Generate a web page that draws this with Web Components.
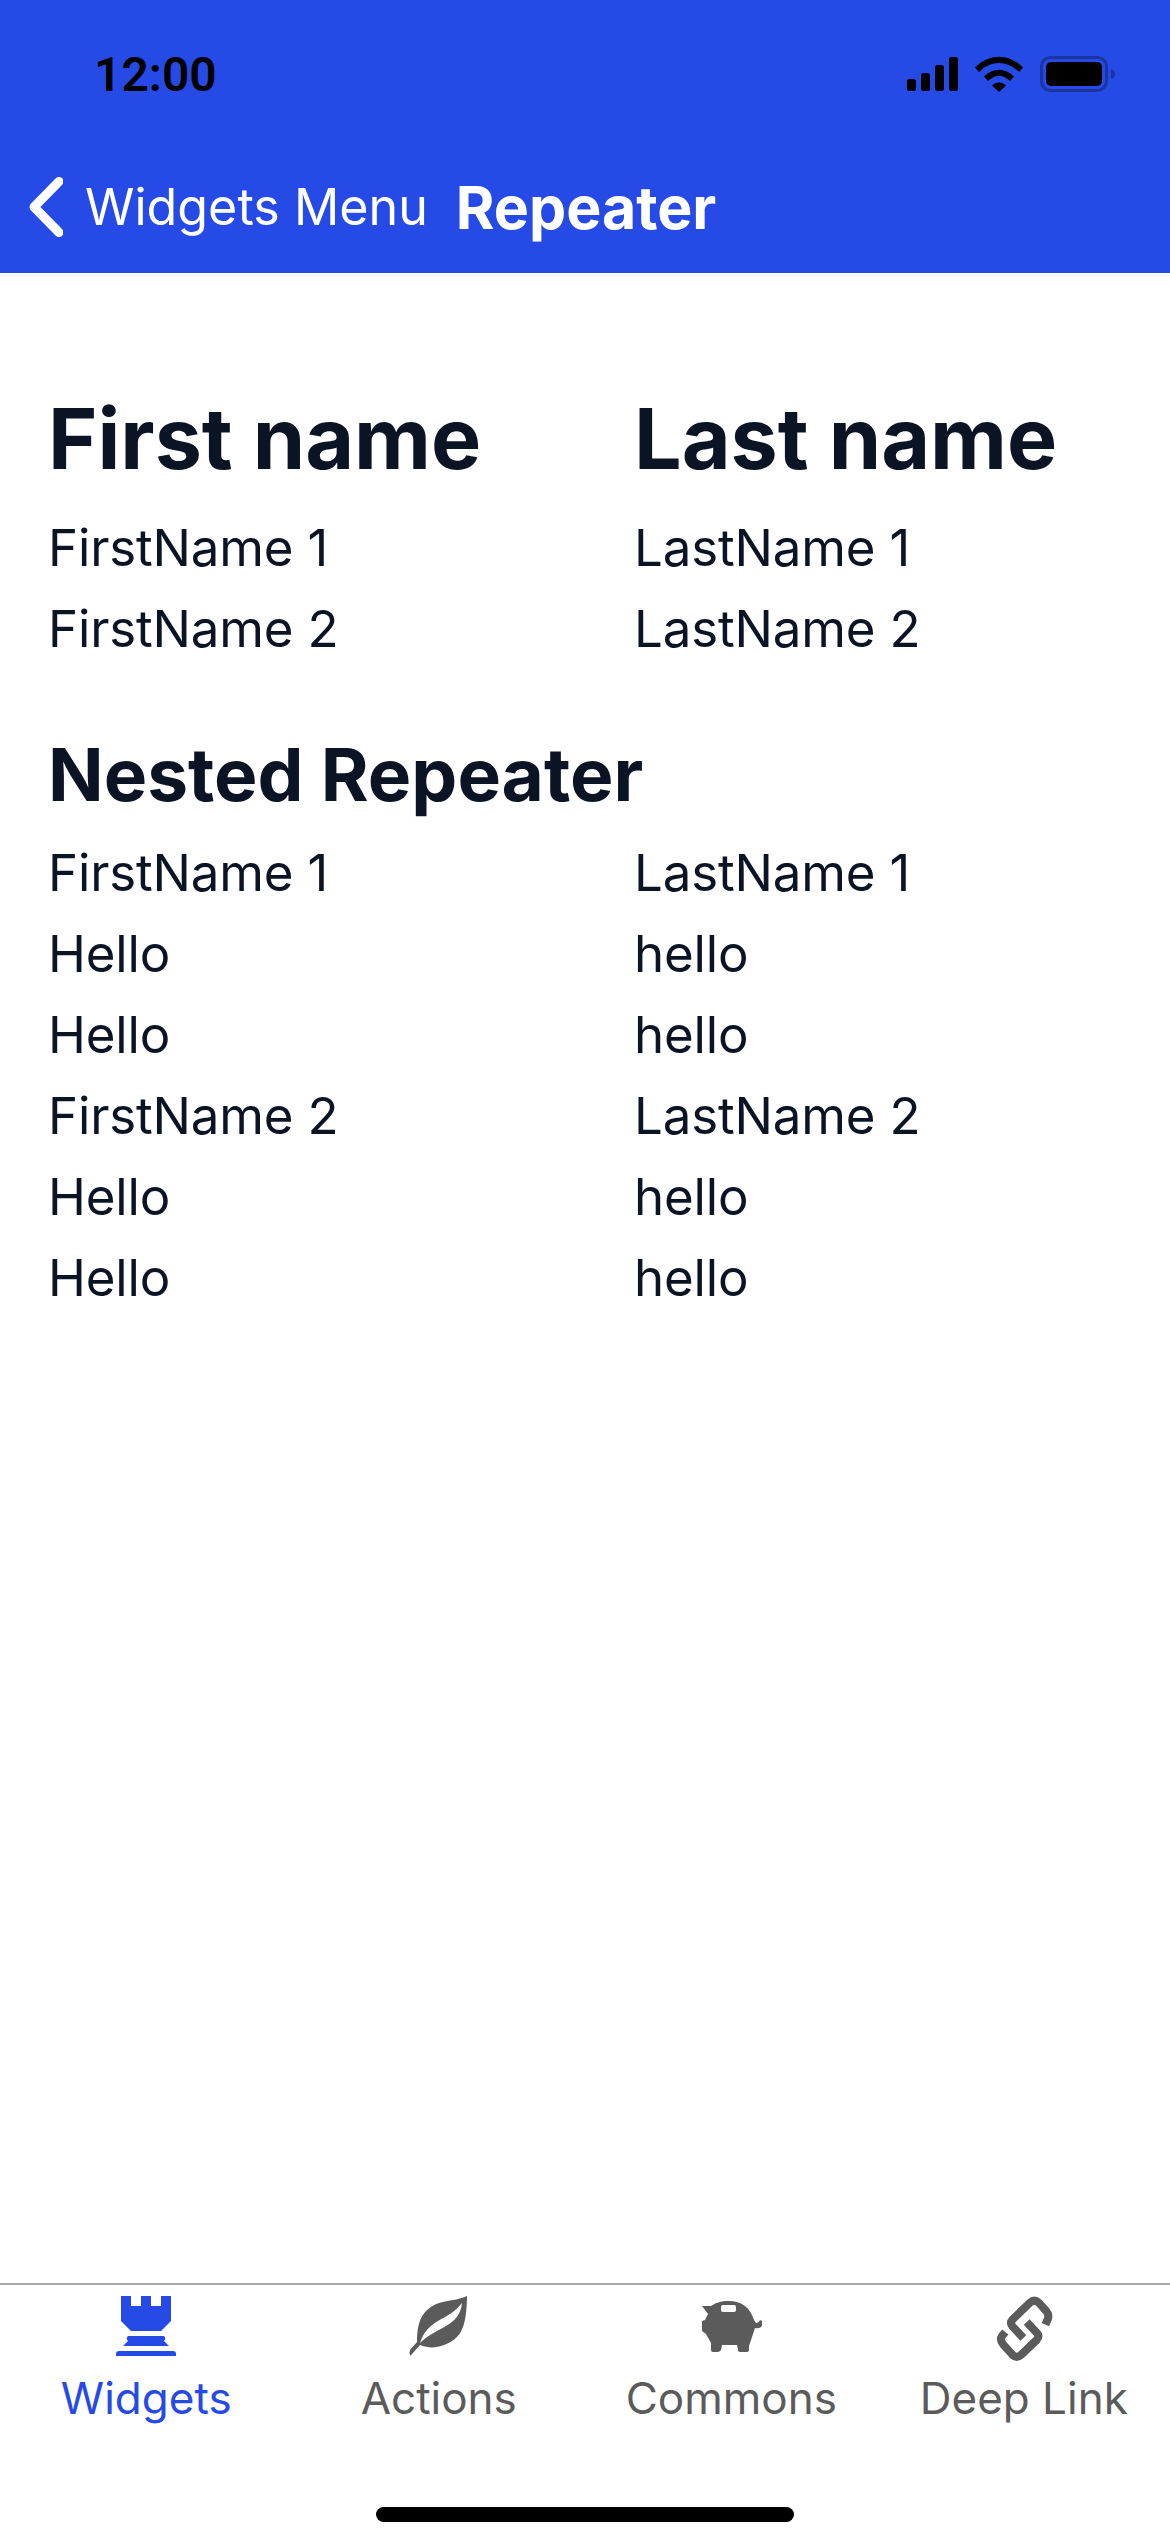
<!DOCTYPE html>
<html>
<head>
<meta charset="utf-8">
<title>Repeater</title>
<style>
  html, body { margin: 0; padding: 0; background: #fff; }
  body { font-family: Inter, "Liberation Sans", sans-serif; }
  app-screen { height: 2532px; }
</style>
</head>
<body>
<app-screen>
  <status-bar slot="top" time="12:00"></status-bar>
  <nav-bar slot="top" back="Widgets Menu" heading="Repeater"></nav-bar>

  <name-row kind="title"><span>First name</span><span slot="last">Last name</span></name-row>
  <name-row><span>FirstName 1</span><span slot="last">LastName 1</span></name-row>
  <name-row><span>FirstName 2</span><span slot="last">LastName 2</span></name-row>
  <name-row kind="subtitle"><span>Nested Repeater</span></name-row>
  <name-row><span>FirstName 1</span><span slot="last">LastName 1</span></name-row>
  <name-row><span>Hello</span><span slot="last">hello</span></name-row>
  <name-row><span>Hello</span><span slot="last">hello</span></name-row>
  <name-row><span>FirstName 2</span><span slot="last">LastName 2</span></name-row>
  <name-row><span>Hello</span><span slot="last">hello</span></name-row>
  <name-row><span>Hello</span><span slot="last">hello</span></name-row>

  <tab-bar slot="bottom">
    <tab-item label="Widgets" icon="rook" active></tab-item>
    <tab-item label="Actions" icon="leaf"></tab-item>
    <tab-item label="Commons" icon="pig"></tab-item>
    <tab-item label="Deep Link" icon="link"></tab-item>
  </tab-bar>
</app-screen>

<script>
const BLUE = "#264ae6";

const TAB_ICONS = {
  rook: `<svg width="60" height="60" viewBox="0 0 60 60" fill="currentColor">
    <path d="M5 0h10v10h10V0h10v10h10V0h10v25L45 35H15L5 25z"/>
    <path d="M12 40h36q2.500 2.500 0 5l5 5H7l5-5q-2.500-2.500 0-5z"/>
    <path d="M0 60v-2q0-3 3-3h54q3 0 3 3v2z"/>
  </svg>`,
  leaf: `<svg width="60" height="60" viewBox="0 0 60 60" fill="currentColor">
    <path fill-rule="evenodd" d="M58 0C50 4 40 4 30 7C18 11 11 20 9 32C8 38 8 42 8 46L1 54Q0 57 1 59Q2 60 3 58L11 49C18 52 26 52 32 50C42 47 50 42 54 31C57 23 58 10 58 0ZM53 7C52 18 46 25 37 30C28 35 18 40 11 47C14 37 20 30 29 25C38 20 47 15 53 7Z"/>
  </svg>`,
  pig: `<svg width="60" height="60" viewBox="-1 0 60 60" fill="currentColor">
    <path fill-rule="evenodd" d="M0 10L9 10C13 7 19 5 27 5C39 5 48 11 52 24L54 27Q57 27 58 24L60 25L60 30Q58 33 53 32L51 38L47 50V54Q47 56 44 56H39Q36 56 36 54L35 49H20L19 54Q18 56 15 56H11Q9 56 9 54L9 47L4 38L0 35V25L3 24L6 18zM21 9Q19 9 19 11V14Q19 16 21 16H32Q34 16 34 14V11Q34 9 32 9z"/>
  </svg>`,
  link: `<svg width="60" height="65" viewBox="84 40 180 195" fill="none" stroke="currentColor" stroke-width="24">
    <path d="M238 126L246 108Q250 94 238 82L218 60Q205 48 192 60L140 110Q130 120 140 132L172 166"/>
    <path d="M182 118L212 150Q222 160 212 172L165 217Q152 228 140 217L112 186Q100 172 108 160L118 148"/>
  </svg>`,
};

class AppScreen extends HTMLElement {
  constructor() {
    super();
    this.attachShadow({ mode: "open" });
    this.shadowRoot.innerHTML = `
      <style>
        :host { display: flex; flex-direction: column; background: #fff; }
        main { flex: 1; padding: 97px 48px 0; display: flex; flex-direction: column; }
      </style>
      <slot name="top"></slot>
      <main><slot></slot></main>
      <slot name="bottom"></slot>
    `;
  }
}

class StatusBar extends HTMLElement {
  constructor() {
    super();
    this.attachShadow({ mode: "open" });
  }

  connectedCallback() {
    this.shadowRoot.innerHTML = `
      <style>
        :host { display: flex; align-items: center; justify-content: space-between; height: 148px; padding: 0 55px 0 94px; background: ${BLUE}; color: #000; box-sizing: border-box; }
        .time { font: 600 48px/1 Roboto, "Liberation Sans", sans-serif; padding-top: 2px; }
        .icons { display: flex; align-items: center; gap: 17px; }
        svg { display: block; }
      </style>
      <span class="time">${this.getAttribute("time")}</span>
      <div class="icons">
        <svg width="51" height="34" viewBox="0 0 51 34" fill="#000">
          <rect x="0" y="22" width="9" height="12" rx="2.500"/>
          <rect x="14" y="16" width="9" height="18" rx="2.500"/>
          <rect x="28" y="8" width="9" height="26" rx="2.500"/>
          <rect x="42" y="0" width="9" height="34" rx="2.500"/>
        </svg>
        <svg width="48" height="36" viewBox="0 0 48 36" fill="#000">
          <path d="M0 11.500C14 -3 34 -3 48 11.500L44 16C32 4 16 4 4 16z"/>
          <path d="M9 20.500C18 11.500 30 11.500 39 20.500L35 25C27 18 21 18 13 25z"/>
          <path d="M17 29.500C21 25.500 27 25.500 31 29.500L24 36z"/>
        </svg>
        <svg width="75" height="36" viewBox="0 0 75 36">
          <rect x="1.500" y="1.500" width="65" height="33" rx="9" fill="none" stroke="#1b359f" stroke-width="3"/>
          <rect x="6" y="6" width="56" height="24" rx="5" fill="#000"/>
          <path d="M71 13q4 1 4 5t-4 5z" fill="#1b359f"/>
        </svg>
      </div>
    `;
  }
}

class NavBar extends HTMLElement {
  constructor() {
    super();
    this.attachShadow({ mode: "open" });
  }

  connectedCallback() {
    this.shadowRoot.innerHTML = `
      <style>
        :host { display: flex; align-items: center; height: 125px; padding: 0 0 6px 29px; background: ${BLUE}; color: #fff; box-sizing: border-box; }
        svg { display: block; margin: -2px 22px 0 0; }
        .back { font: 400 50.200px/1 Inter, sans-serif; margin-right: 28px; white-space: nowrap; }
        h1 { font: 700 59px/1 Inter, sans-serif; margin: 0; white-space: nowrap; }
      </style>
      <svg width="34" height="60" viewBox="0 0 34 60" fill="none" stroke="#fff" stroke-width="9" stroke-linecap="round" stroke-linejoin="round">
        <path d="M30 4.500L5 30l25 25.500"/>
      </svg>
      <span class="back">${this.getAttribute("back")}</span>
      <h1>${this.getAttribute("heading")}</h1>
    `;
  }
}

class NameRow extends HTMLElement {
  constructor() {
    super();
    this.attachShadow({ mode: "open" });
    this.shadowRoot.innerHTML = `
      <style>
        :host { display: grid; grid-template-columns: 586px 1fr; height: 81px; align-items: center; color: #0a1425; font: 400 51px/1 Inter, sans-serif; letter-spacing: -0.150px; white-space: nowrap; }
        :host([kind="title"]) { height: 137px; font-size: 84.300px; font-weight: 700; letter-spacing: 0; }
        :host([kind="subtitle"]) { height: 115px; margin-top: 48px; font-size: 73px; font-weight: 700; letter-spacing: 0; }
      </style>
      <div><slot></slot></div>
      <div><slot name="last"></slot></div>
    `;
  }
}

class TabBar extends HTMLElement {
  constructor() {
    super();
    this.attachShadow({ mode: "open" });
    this.shadowRoot.innerHTML = `
      <style>
        :host { display: block; height: 249px; border-top: 2px solid #a8a8a8; box-sizing: border-box; }
        .tabs { display: grid; grid-template-columns: repeat(4, 1fr); }
        .home { width: 418px; height: 15px; margin: 77px auto 0; border-radius: 8px; background: #000; }
      </style>
      <div class="tabs"><slot></slot></div>
      <div class="home"></div>
    `;
  }
}

class TabItem extends HTMLElement {
  constructor() {
    super();
    this.attachShadow({ mode: "open" });
  }

  connectedCallback() {
    const icon = TAB_ICONS[this.getAttribute("icon")];
    this.shadowRoot.innerHTML = `
      <style>
        :host { display: flex; flex-direction: column; align-items: center; height: 145px; padding-top: 11px; box-sizing: border-box; color: #5b5b5b; white-space: nowrap; }
        :host([active]) { color: ${BLUE}; }
        .icon { height: 65px; display: flex; align-items: flex-start; }
        svg { display: block; overflow: visible; }
        .label { font: 400 44px/1 Inter, sans-serif; margin-top: 15px; }
      </style>
      <div class="icon">${icon}</div>
      <span class="label">${this.getAttribute("label")}</span>
    `;
  }
}

customElements.define("app-screen", AppScreen);
customElements.define("status-bar", StatusBar);
customElements.define("nav-bar", NavBar);
customElements.define("name-row", NameRow);
customElements.define("tab-bar", TabBar);
customElements.define("tab-item", TabItem);
</script>
</body>
</html>
